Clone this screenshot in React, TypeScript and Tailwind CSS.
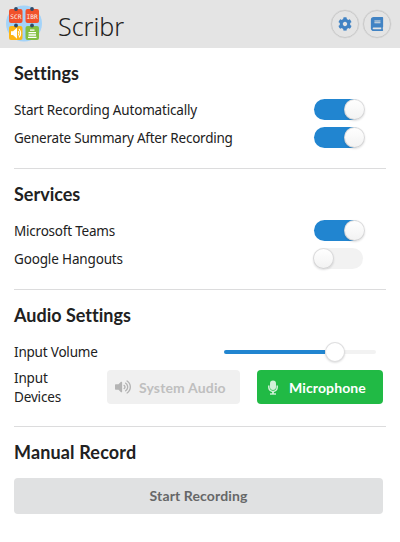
import type { ReactNode } from "react";
import { FaBook, FaCog, FaVolumeUp } from "react-icons/fa";

function Logo() {
  return (
    <svg width="36" height="37" viewBox="0 0 36 37" className="block">
      <circle cx="18" cy="18.5" r="18" fill="#a3d3f9" />
      <rect x="3" y="4" width="13.5" height="14" rx="2" fill="#f1512b" />
      <rect x="19.5" y="4" width="13.5" height="14" rx="2" fill="#f1512b" />
      <rect x="3" y="21" width="13.5" height="14" rx="2" fill="#fdb515" />
      <rect x="19.5" y="21" width="13.5" height="14" rx="2" fill="#83bf43" />
      <g fill="#314a66">
        <circle cx="10" cy="4" r="1.9" />
        <circle cx="26" cy="4" r="1.9" />
        <circle cx="10" cy="20.5" r="1.9" />
        <circle cx="26" cy="20.5" r="1.9" />
      </g>
      <g fill="#fff0eb" fontFamily="'DejaVu Sans Mono', monospace" fontSize="6.2" textAnchor="middle">
        <text x="9.8" y="13.6">SCR</text>
        <text x="26.2" y="13.6">IBR</text>
      </g>
      <path d="M5 26.3h2l4-3.6v11l-4-3.6H5z" fill="#fff" />
      <path d="M12.2 26.1q1.6 2.2 0 4.4M13 24q3.4 4.2 0 8.4" fill="none" stroke="#fff" strokeWidth="1.1" />
      <path d="M24 25.2h4.5M22.5 27.6h7.5M22.5 30h7.5M22 32.3h8.5" stroke="#fff" strokeWidth="1.3" />
    </svg>
  );
}

function MicrophoneIcon() {
  return (
    <svg width="10" height="15" viewBox="0 0 10 15" className="block text-[#d3f1da]" fill="none" stroke="currentColor">
      <rect x="2" y="0.5" width="6" height="9.6" rx="3" fill="currentColor" stroke="none" />
      <path d="M0.8 5.6v1.6a4.2 4.2 0 0 0 8.4 0V5.6" strokeWidth="1.5" />
      <path d="M5 11v3" strokeWidth="1.8" />
      <path d="M2 14h6" strokeWidth="1.4" />
    </svg>
  );
}

function RoundButton({ label, children }: { label: string; children: ReactNode }) {
  return (
    <button
      aria-label={label}
      className="flex size-7 items-center justify-center rounded-full border-[1.5px] border-[#c9c9c9] text-[14px] text-[#4183c4] shadow-[0_0_0_0.3px_#cccccc]"
    >
      {children}
    </button>
  );
}

function Toggle({ on }: { on: boolean }) {
  return (
    <div className={`mb-0.5 flex h-[21px] w-[49px] rounded-full ${on ? "justify-end bg-[#2185d0]" : "bg-[#f2f2f2]"}`}>
      <div
        className={`size-[21px] rounded-full bg-linear-to-b from-white to-[#f2f2f2] shadow-[0_1px_2px_0_rgba(34,36,38,0.15),0_0_0_1px_rgba(34,36,38,0.15)_inset] ${on ? "-mr-0.5" : "-ml-px"}`}
      />
    </div>
  );
}

const labelText = "font-['Noto_Sans',sans-serif] text-[13.5px]";

function SettingRow({ label, on, tracking }: { label: string; on: boolean; tracking: string }) {
  return (
    <div className="flex h-7 items-center justify-between pr-[23px]">
      <span className={`whitespace-nowrap ${labelText} ${tracking}`}>{label}</span>
      <Toggle on={on} />
    </div>
  );
}

function Heading({ children }: { children: ReactNode }) {
  return <h2 className="text-[18px] font-bold leading-[23px] [font-variant-ligatures:none]">{children}</h2>;
}

export default function App() {
  return (
    <div className="h-[542px] w-[400px] overflow-hidden bg-white font-[Lato,sans-serif] text-[14px] text-[#212121]">
      <header className="flex h-12 items-center bg-[#e4e4e4] pr-[9px] pl-1.5">
        <div className="-mt-0.5">
          <Logo />
        </div>
        <h1 className="ml-4 pt-1 font-['Noto_Sans',sans-serif] text-[25px] leading-8 font-light">Scribr</h1>
        <div className="ml-auto flex gap-1">
          <RoundButton label="Settings">
            <FaCog className="size-3.5" />
          </RoundButton>
          <RoundButton label="Guide">
            <FaBook className="h-3.5 w-[14px]" />
          </RoundButton>
        </div>
      </header>
      <main className="px-3.5 pt-3.5">
        <section className="h-[107px] border-b border-[#dcdcdd]">
          <Heading>Settings</Heading>
          <div className="pt-[11px]">
            <SettingRow label="Start Recording Automatically" on tracking="tracking-[-0.18px]" />
            <SettingRow label="Generate Summary After Recording" on tracking="tracking-[-0.23px]" />
          </div>
        </section>
        <section className="h-[121px] border-b border-[#dcdcdd] pt-3.5">
          <Heading>Services</Heading>
          <div className="pt-[11px]">
            <SettingRow label="Microsoft Teams" on tracking="tracking-[-0.22px]" />
            <SettingRow label="Google Hangouts" on={false} tracking="tracking-[-0.15px]" />
          </div>
        </section>
        <section className="h-[137px] border-b border-[#dcdcdd] pt-3.5">
          <Heading>Audio Settings</Heading>
          <div className="mt-[14px] flex h-[22px] items-center justify-between pr-2.5">
            <span className={`${labelText} tracking-[-0.2px]`}>Input Volume</span>
            <div className="flex h-1 w-[152px] items-center rounded-sm bg-[#f2f2f2]">
              <div className="h-1 w-[101px] rounded-l-sm bg-[#2185d0]" />
              <div className="size-5 shrink-0 rounded-full bg-white shadow-[0_1px_2px_0_rgba(34,36,38,0.15),0_0_0_1px_rgba(34,36,38,0.15)_inset]" />
            </div>
          </div>
          <div className="mt-[7px] flex items-start pr-[3px]">
            <span className={`-mt-px w-[93px] leading-[19px] ${labelText} tracking-[-0.15px]`}>
              Input
              <br />
              Devices
            </span>
            <button className="flex h-[34px] w-[133px] items-center rounded bg-[#f0f0f0] pl-2 font-bold text-[#bfbfbf]">
              <FaVolumeUp className="size-4 text-[#b4b4b4]" />
              <span className="ml-2 whitespace-nowrap tracking-[0.15px]">System Audio</span>
            </button>
            <button className="ml-auto flex h-[34px] w-[126px] items-center rounded bg-[#21ba45] pl-[11px] font-bold text-white">
              <MicrophoneIcon />
              <span className="ml-[11px] whitespace-nowrap tracking-[0.12px]">Microphone</span>
            </button>
          </div>
        </section>
        <section className="pt-3.5 pr-[3px]">
          <Heading>
            <span className="tracking-[0.15px]">Manual Record</span>
          </Heading>
          <button className="mt-3.5 h-9 w-full rounded bg-[#e0e1e2] pb-0.5 font-bold tracking-[0.12px] text-[#666768]">
            Start Recording
          </button>
        </section>
      </main>
    </div>
  );
}
